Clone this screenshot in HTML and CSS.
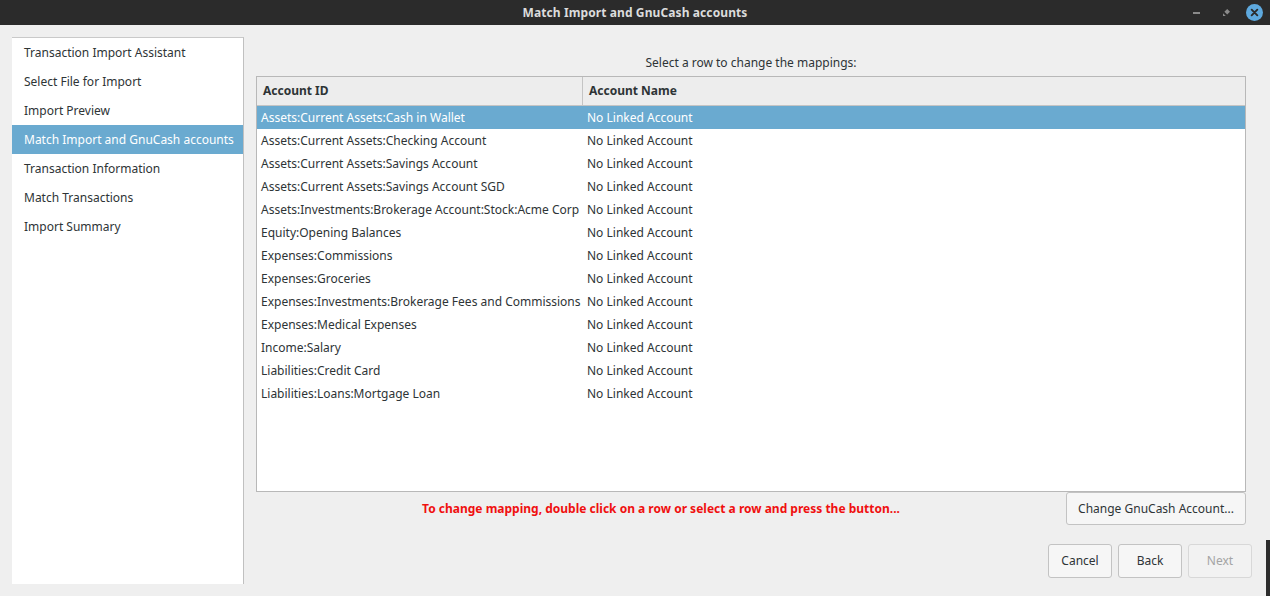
FILE: index.html
```html
<!DOCTYPE html>
<html>
<head>
<meta charset="utf-8">
<link rel="stylesheet" href="styles.css">
</head>
<body>
<div class="window">
  <div class="titlebar">
    <div class="title">Match Import and GnuCash accounts</div>
    <div class="wm">
      <span class="wm-min"></span>
      <svg class="wm-max" width="10" height="10" viewBox="0 0 10 10"><path d="M2 4 L6 0 L10 4 L6 8 Z M0 6 L4 10 L0 10 Z" fill="#8a8a8a"/></svg>
      <svg class="wm-close" width="18" height="18" viewBox="0 0 18 18"><circle cx="9" cy="9" r="9" fill="#5ea9de"/><path d="M6 6 L12 12 M12 6 L6 12" stroke="#2b2b2b" stroke-width="2" stroke-linecap="round"/></svg>
    </div>
  </div>
  <div class="main">
    <ul class="sidebar">
      <li>Transaction Import Assistant</li>
      <li>Select File for Import</li>
      <li>Import Preview</li>
      <li class="active">Match Import and GnuCash accounts</li>
      <li>Transaction Information</li>
      <li>Match Transactions</li>
      <li>Import Summary</li>
    </ul>
    <div class="content">
      <div class="prompt">Select a row to change the mappings:</div>
      <div class="table">
        <div class="thead">
          <div class="c1">Account ID</div>
          <div class="c2">Account Name</div>
        </div>
        <div class="tbody">
          <div class="row sel"><div class="c1">Assets:Current Assets:Cash in Wallet</div><div class="c2">No Linked Account</div></div>
          <div class="row"><div class="c1">Assets:Current Assets:Checking Account</div><div class="c2">No Linked Account</div></div>
          <div class="row"><div class="c1">Assets:Current Assets:Savings Account</div><div class="c2">No Linked Account</div></div>
          <div class="row"><div class="c1">Assets:Current Assets:Savings Account SGD</div><div class="c2">No Linked Account</div></div>
          <div class="row"><div class="c1">Assets:Investments:Brokerage Account:Stock:Acme Corp</div><div class="c2">No Linked Account</div></div>
          <div class="row"><div class="c1">Equity:Opening Balances</div><div class="c2">No Linked Account</div></div>
          <div class="row"><div class="c1">Expenses:Commissions</div><div class="c2">No Linked Account</div></div>
          <div class="row"><div class="c1">Expenses:Groceries</div><div class="c2">No Linked Account</div></div>
          <div class="row"><div class="c1">Expenses:Investments:Brokerage Fees and Commissions</div><div class="c2">No Linked Account</div></div>
          <div class="row"><div class="c1">Expenses:Medical Expenses</div><div class="c2">No Linked Account</div></div>
          <div class="row"><div class="c1">Income:Salary</div><div class="c2">No Linked Account</div></div>
          <div class="row"><div class="c1">Liabilities:Credit Card</div><div class="c2">No Linked Account</div></div>
          <div class="row"><div class="c1">Liabilities:Loans:Mortgage Loan</div><div class="c2">No Linked Account</div></div>
        </div>
      </div>
      <div class="actionrow">
        <div class="hint">To change mapping, double click on a row or select a row and press the button...</div>
        <button class="btn change">Change GnuCash Account...</button>
      </div>
      <div class="buttons">
        <button class="btn">Cancel</button>
        <button class="btn">Back</button>
        <button class="btn disabled">Next</button>
      </div>
    </div>
  </div>
  <div class="edge"></div>
</div>
</body>
</html>
```
FILE: styles.css
```css
* { box-sizing: border-box; }
html, body { margin: 0; padding: 0; }
body {
  width: 1270px;
  height: 596px;
  overflow: hidden;
  font-family: "Noto Sans", "Open Sans", sans-serif;
  font-size: 12px;
  color: #2e3436;
  background: #efefef;
}
.window { position: relative; width: 1270px; height: 596px; display: flex; flex-direction: column; }
.titlebar {
  height: 25px;
  background: #2b2b2b;
  display: flex;
  align-items: center;
  justify-content: center;
  position: relative;
  flex: none;
}
.title { color: #dcdcdc; font-weight: bold; font-size: 12px; letter-spacing: 0.1px; }
.wm { position: absolute; right: 7px; top: 3px; height: 19px; display: flex; align-items: center; }
.wm-min { display: block; width: 7px; height: 2px; background: #8a8a8a; margin-right: 23px; }
.wm-max { margin-right: 16px; width: 7px; height: 7px; }
.wm-close { width: 17px; height: 17px; }
.main { flex: 1; display: flex; padding: 12px 18px 12px 12px; gap: 12px; min-height: 0; }
.sidebar {
  list-style: none;
  margin: 0;
  padding: 0;
  width: 232px;
  flex: none;
  background: #fff;
  border-top: 1px solid #c9c9c9;
  border-right: 1px solid #c0c0c0;
}
.sidebar li { height: 29px; line-height: 29px; padding-left: 12px; white-space: nowrap; }
.sidebar li.active { background: #6aaad0; color: #fff; }
.content { flex: 1; display: flex; flex-direction: column; min-width: 0; }
.prompt { text-align: center; height: 39px; padding-top: 19px; line-height: 14px; margin-right: 6px; }
.table {
  height: 416px;
  margin-right: 6px;
  border: 1px solid #b8b8b8;
  background: #fff;
  display: flex;
  flex-direction: column;
}
.thead { display: flex; height: 29px; background: #ededed; border-bottom: 1px solid #c4c4c4; font-weight: bold; }
.thead .c1 { width: 326px; border-right: 1px solid #c4c4c4; padding-left: 6px; line-height: 27px; }
.thead .c2 { padding-left: 6px; line-height: 27px; }
.row { display: flex; height: 23px; line-height: 24px; }
.row .c1 { width: 326px; padding-left: 4px; white-space: nowrap; overflow: hidden; }
.row .c2 { padding-left: 4px; }
.row.sel { background: #6aaad0; color: #fff; }
.actionrow { display: flex; align-items: center; height: 33px; margin-right: 6px; }
.hint { flex: 1; text-align: center; color: #f01010; font-weight: bold; font-size: 12px; }
.btn {
  font-family: "Noto Sans", "Open Sans", sans-serif;
  font-size: 12px;
  color: #2e3436;
  background: #f6f6f6;
  border: 1px solid #c3c3c3;
  border-radius: 3px;
  height: 33px;
  padding: 0 8px;
  white-space: nowrap;
}
.change { width: 180px; height: 33px; }
.buttons { display: flex; justify-content: flex-end; gap: 6px; margin-top: 19px; }
.buttons .btn { width: 64px; height: 34px; padding: 0; line-height: 30px; }
.btn.disabled { color: #a4a4a4; border-color: #d8d8d8; background: #f2f2f2; }
.edge { position: absolute; right: 0; top: 540px; width: 4px; height: 56px; background: #2c2c2c; }
```
